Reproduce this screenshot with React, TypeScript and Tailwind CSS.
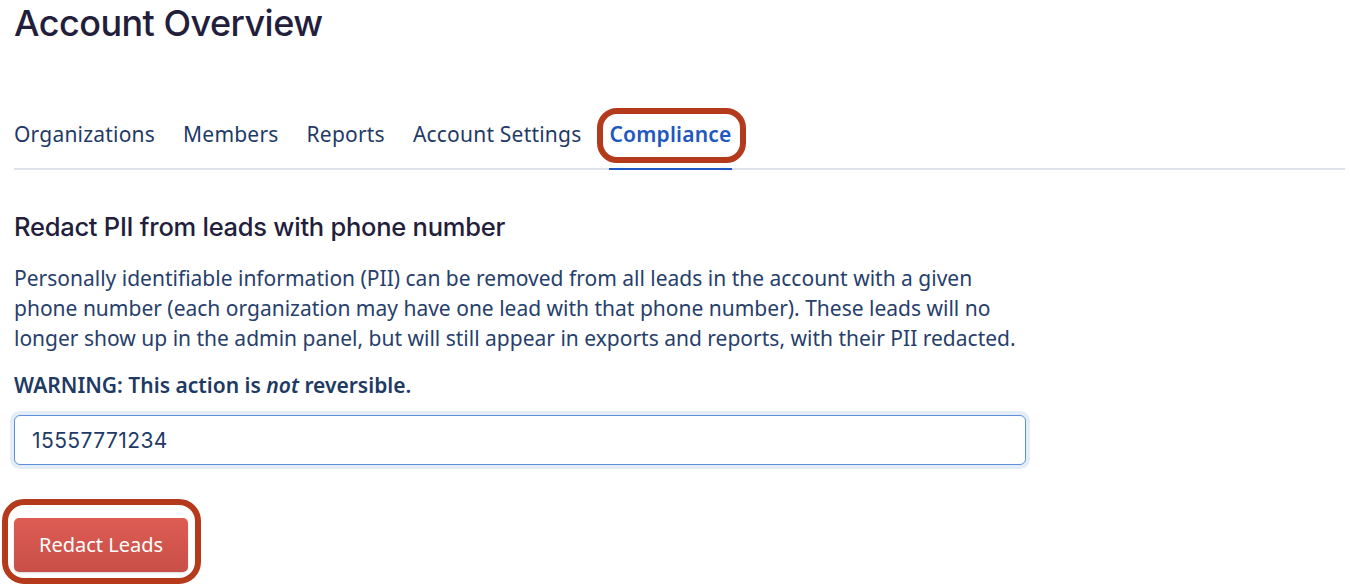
import { useState } from 'react';

const tabs = ['Organizations', 'Members', 'Reports', 'Account Settings', 'Compliance'];

const headingFont = { fontFamily: 'Inter, "Noto Sans", sans-serif' };

export default function App() {
  const [active, setActive] = useState('Compliance');
  const [phone, setPhone] = useState('15557771234');

  return (
    <div className="min-h-screen bg-white pl-[14px] pr-[5px]" style={{ fontFamily: '"Noto Sans", "Open Sans", sans-serif' }}>
      <h1 className="pt-[1px] text-[36px] leading-[44px] font-medium tracking-[-0.015em] text-[#221e3c]" style={headingFont}>
        Account Overview
      </h1>

      {/* Tab bar */}
      <nav className="mt-[74px] flex gap-[28px] border-b-2 border-[#dfe1ea]">
        {tabs.map((tab) => {
          const isActive = tab === active;
          return (
            <button
              key={tab}
              onClick={() => setActive(tab)}
              className={`relative -mb-[2px] pb-[19px] text-[21px] leading-[30px] tracking-[0.01em] border-b-2 ${
                isActive
                  ? 'font-semibold text-[#2157c1] border-[#2157c1]'
                  : 'text-[#1f3a66] border-transparent'
              }`}
            >
              {tab}
              {isActive && (
                <span className="pointer-events-none absolute -left-[12px] -right-[14px] -top-[11px] bottom-[5px] rounded-[20px] border-[6px] border-[#b53a1c]" />
              )}
            </button>
          );
        })}
      </nav>

      <h2 className="mt-[41px] text-[25.5px] leading-[32px] font-medium tracking-[-0.01em] text-[#221e3c]" style={headingFont}>
        Redact PII from leads with phone number
      </h2>
      <p className="mt-[20px] max-w-[1020px] text-[21px] leading-[30px] text-[#27406b]">
        Personally identifiable information (PII) can be removed from all leads in the account with a given
        phone number (each organization may have one lead with that phone number). These leads will no
        longer show up in the admin panel, but will still appear in exports and reports, with their PII redacted.
      </p>
      <p className="mt-[17px] text-[21px] leading-[30px] font-semibold text-[#203a63]">
        WARNING: This action is <em>not</em> reversible.
      </p>

      <input
        value={phone}
        onChange={(e) => setPhone(e.target.value)}
        className="mt-[15px] block h-[50px] w-[1012px] rounded-[6px] border border-[#5b8fd6] bg-white px-[17px] text-[21px] tracking-[0.02em] text-[#1f3a66] shadow-[0_0_0_4px_#e4ecf8] outline-none"
        style={headingFont}
      />

      <div className="relative mt-[53px] inline-block">
        <button className="h-[54px] w-[174px] rounded-[5px] bg-linear-to-b from-[#dd5c53] to-[#c84f47] text-[20px] text-white shadow-[0_1px_2px_rgba(0,0,0,0.15)]">
          Redact Leads
        </button>
        <span className="pointer-events-none absolute -left-[12px] -right-[13px] -top-[19px] -bottom-[12px] rounded-[22px] border-[6px] border-[#b53a1c]" />
      </div>
    </div>
  );
}
